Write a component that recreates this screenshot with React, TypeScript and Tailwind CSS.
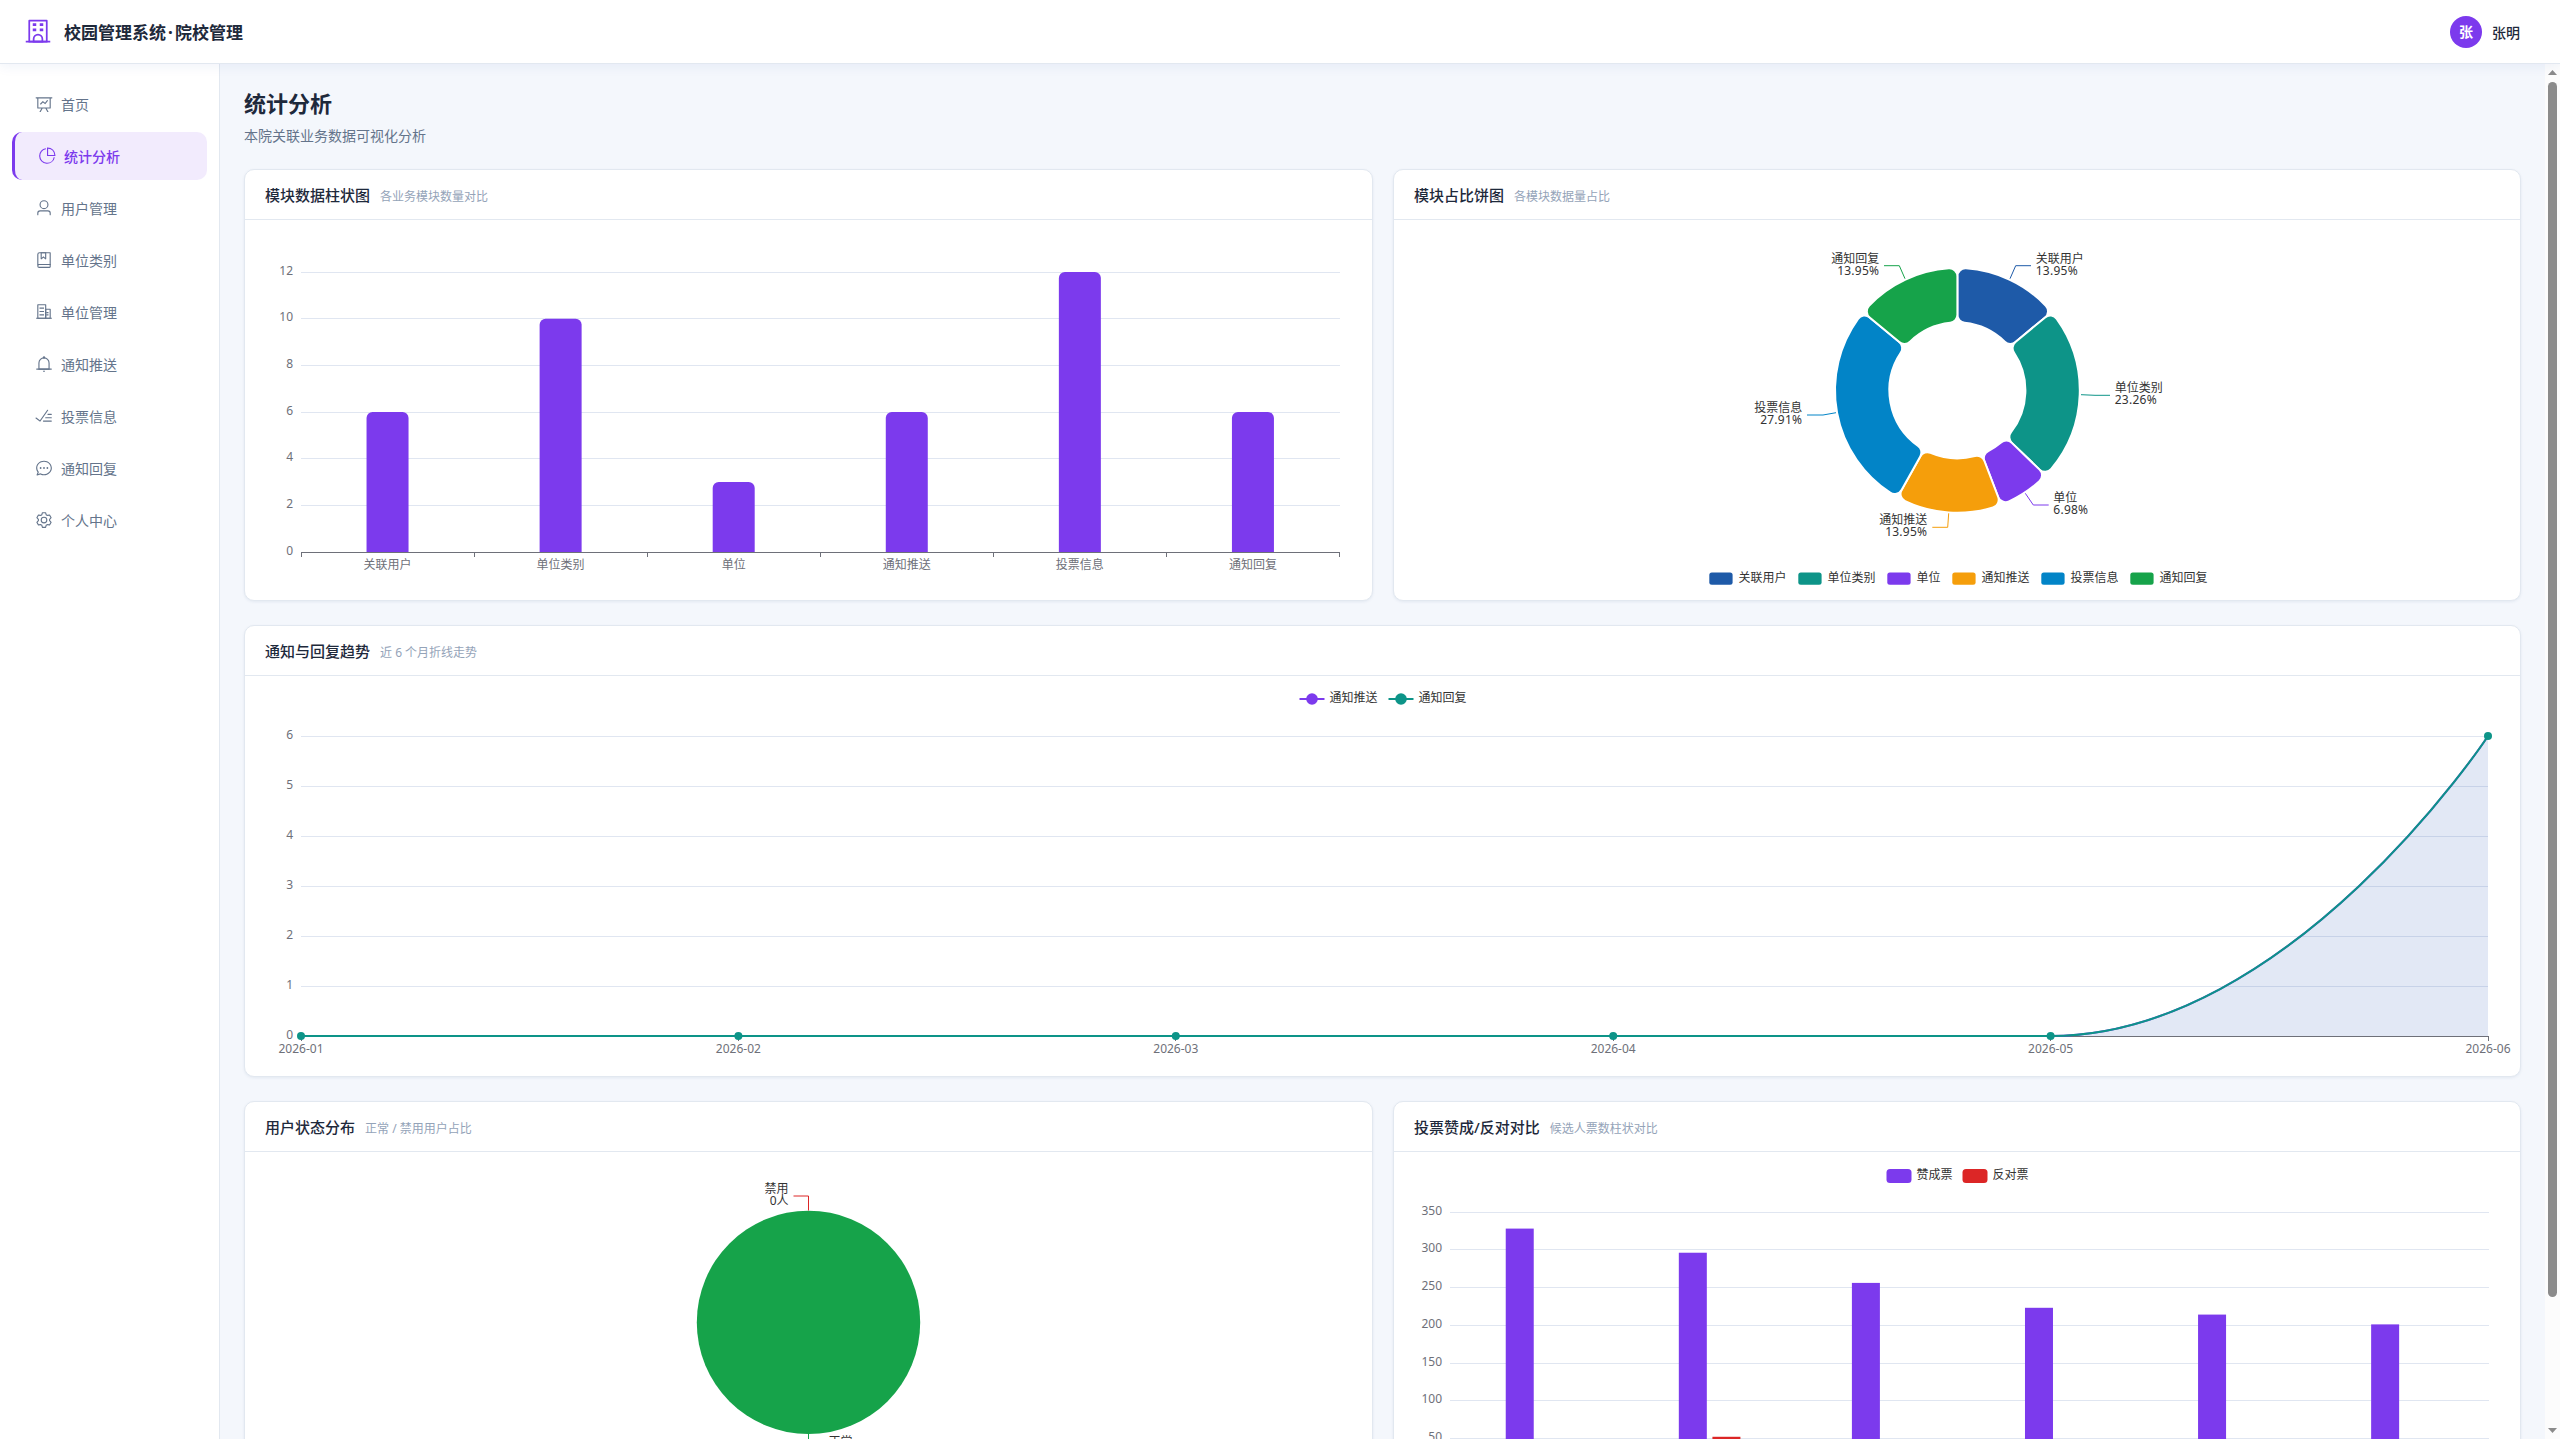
import clsx from "clsx";

const PURPLE = "#7c3aed";
const TEAL = "#0d9488";
const GREEN = "#16a34a";
const RED = "#dc2626";
const GRID = "#e0e6f1";
const AXIS = "#6e7079";

const icons = {
  school: [
    "M224 128v704h576V128zm-32-64h640a32 32 0 0 1 32 32v768a32 32 0 0 1-32 32H192a32 32 0 0 1-32-32V96a32 32 0 0 1 32-32",
    "M64 832h896v64H64zm256-640h128v96H320z",
    "M384 832h256v-64a128 128 0 1 0-256 0zm128-256a192 192 0 0 1 192 192v128H320V768a192 192 0 0 1 192-192M320 384h128v96H320zm256-192h128v96H576zm0 192h128v96H576z",
  ],
  dataLine: [
    "M359.168 768H160a32 32 0 0 1-32-32V192H64a32 32 0 0 1 0-64h896a32 32 0 1 1 0 64h-64v544a32 32 0 0 1-32 32H665.216l110.848 192h-73.856L591.36 768H433.024L322.176 960H248.32zM832 192H192v512h640zM342.656 534.656a32 32 0 1 1-45.312-45.312L444.992 341.76l125.44 94.08L679.04 300.032a32 32 0 1 1 49.92 39.936L581.632 524.224 451.008 426.24 342.656 534.592z",
  ],
  pieChart: [
    "M448 68.48v64.832A384.128 384.128 0 0 0 512 896a384.128 384.128 0 0 0 378.688-320h64.768A448.128 448.128 0 0 1 64 512 448.128 448.128 0 0 1 448 68.48",
    "M576 97.28V448h350.72A384.064 384.064 0 0 0 576 97.28M512 64V33.152A448 448 0 0 1 990.848 512H512z",
  ],
  user: [
    "M512 512a192 192 0 1 0 0-384 192 192 0 0 0 0 384m0 64a256 256 0 1 1 0-512 256 256 0 0 1 0 512m320 320v-96a96 96 0 0 0-96-96H288a96 96 0 0 0-96 96v96a32 32 0 1 1-64 0v-96a160 160 0 0 1 160-160h448a160 160 0 0 1 160 160v96a32 32 0 1 1-64 0",
  ],
  collection: [
    "M192 736h640V128H256a64 64 0 0 0-64 64zm64-672h608a32 32 0 0 1 32 32v672a32 32 0 0 1-32 32H160l-32 57.536V192A128 128 0 0 1 256 64",
    "M240 800a48 48 0 1 0 0 96h592v-96zm0-64h656v160a64 64 0 0 1-64 64H240a112 112 0 0 1 0-224m144-608v250.88l96-76.8 96 76.8V128zm-64-64h320v381.44a32 32 0 0 1-51.968 24.96L480 384l-108.032 86.4A32 32 0 0 1 320 445.44z",
  ],
  office: [
    "M192 128v704h384V128zm-32-64h448a32 32 0 0 1 32 32v768a32 32 0 0 1-32 32H160a32 32 0 0 1-32-32V96a32 32 0 0 1 32-32",
    "M256 256h256v64H256zm0 192h256v64H256zm0 192h256v64H256zm384-128h128v64H640zm0 128h128v64H640zM64 832h896v64H64z",
    "M640 384v448h192V384zm-32-64h256a32 32 0 0 1 32 32v512a32 32 0 0 1-32 32H608a32 32 0 0 1-32-32V352a32 32 0 0 1 32-32",
  ],
  bell: [
    "M512 64a64 64 0 0 1 64 64v64H448v-64a64 64 0 0 1 64-64",
    "M256 768h512V448a256 256 0 1 0-512 0zm256-640a320 320 0 0 1 320 320v384H192V448a320 320 0 0 1 320-320",
    "M96 768h832q32 0 32 32t-32 32H96q-32 0-32-32t32-32m352 128h128a64 64 0 0 1-128 0",
  ],
  finished: [
    "M280.768 753.728 691.456 167.04a32 32 0 1 1 52.416 36.672L314.24 817.472a32 32 0 0 1-45.44 7.296l-230.4-172.8a32 32 0 0 1 38.4-51.2zM736 448a32 32 0 1 1 0-64h192a32 32 0 1 1 0 64zM608 640a32 32 0 0 1 0-64h319.936a32 32 0 1 1 0 64zM480 832a32 32 0 1 1 0-64h447.936a32 32 0 1 1 0 64z",
  ],
  chat: [
    "m174.72 855.68 135.296-45.12 23.68 11.84C388.096 849.536 448.576 864 512 864c211.84 0 384-166.784 384-352S723.84 160 512 160 128 326.784 128 512c0 69.12 24.96 139.264 70.848 199.232l22.08 28.8-46.272 115.584zm-45.248 82.56A32 32 0 0 1 89.6 896l58.368-145.92C94.72 680.32 64 596.864 64 512 64 299.904 256 96 512 96s448 203.904 448 416-192 416-448 416a461.06 461.06 0 0 1-206.912-48.384l-175.616 58.56z",
    "M512 563.2a51.2 51.2 0 1 1 0-102.4 51.2 51.2 0 0 1 0 102.4m192 0a51.2 51.2 0 1 1 0-102.4 51.2 51.2 0 0 1 0 102.4m-384 0a51.2 51.2 0 1 1 0-102.4 51.2 51.2 0 0 1 0 102.4",
  ],
  setting: [
    "M600.704 64a32 32 0 0 1 30.464 22.208l35.2 109.376c14.784 7.232 28.928 15.36 42.432 24.512l112.384-24.192a32 32 0 0 1 34.432 15.36L944.32 364.8a32 32 0 0 1-4.032 37.504l-77.12 85.12a357.12 357.12 0 0 1 0 49.024l77.12 85.248a32 32 0 0 1 4.032 37.504l-88.704 153.6a32 32 0 0 1-34.432 15.296L708.8 803.904c-13.44 9.088-27.648 17.28-42.368 24.512l-35.264 109.376A32 32 0 0 1 600.704 960H423.296a32 32 0 0 1-30.464-22.208L357.696 828.48a351.616 351.616 0 0 1-42.56-24.64l-112.32 24.256a32 32 0 0 1-34.432-15.36L79.68 659.2a32 32 0 0 1 4.032-37.504l77.12-85.248a357.12 357.12 0 0 1 0-48.896l-77.12-85.248A32 32 0 0 1 79.68 364.8l88.704-153.6a32 32 0 0 1 34.432-15.296l112.32 24.256c13.568-9.152 27.776-17.408 42.56-24.64l35.2-109.312A32 32 0 0 1 423.232 64H600.64zm-23.424 64H446.72l-36.352 113.088-24.512 11.968a294.113 294.113 0 0 0-34.816 20.096l-22.656 15.36-116.224-25.088-65.28 113.152 79.68 88.192-1.92 27.136a293.12 293.12 0 0 0 0 40.192l1.92 27.136-79.808 88.192 65.344 113.152 116.224-25.024 22.656 15.296a294.113 294.113 0 0 0 34.816 20.096l24.512 11.968L446.72 896h130.688l36.48-113.152 24.448-11.904a288.282 288.282 0 0 0 34.752-20.096l22.592-15.296 116.288 25.024 65.28-113.152-79.744-88.192 1.92-27.136a293.12 293.12 0 0 0 0-40.256l-1.92-27.136 79.808-88.128-65.344-113.152-116.288 24.96-22.592-15.232a287.616 287.616 0 0 0-34.752-20.096l-24.448-11.904L577.344 128zM512 320a192 192 0 1 1 0 384 192 192 0 0 1 0-384m0 64a128 128 0 1 0 0 256 128 128 0 0 0 0-256",
  ],
};

type IconName = keyof typeof icons;

const menu: { name: string; icon: IconName; active?: boolean }[] = [
  { name: "首页", icon: "dataLine" },
  { name: "统计分析", icon: "pieChart", active: true },
  { name: "用户管理", icon: "user" },
  { name: "单位类别", icon: "collection" },
  { name: "单位管理", icon: "office" },
  { name: "通知推送", icon: "bell" },
  { name: "投票信息", icon: "finished" },
  { name: "通知回复", icon: "chat" },
  { name: "个人中心", icon: "setting" },
];

const Icon = ({ name, className }: { name: IconName; className?: string }) => (
  <svg viewBox="0 0 1024 1024" fill="currentColor" className={className}>
    {icons[name].map((d) => (
      <path key={d} d={d} />
    ))}
  </svg>
);

const Header = () => (
  <header className="relative z-10 flex h-16 shrink-0 items-center justify-between border-b border-[#e2e8f0] bg-white pl-6 pr-10 shadow-[0_2px_12px_rgba(30,64,175,0.07)]">
    <div className="flex items-center gap-3">
      <Icon name="school" className="h-7 w-7 text-[#7c3aed]" />
      <h1 className="flex items-center pt-[3px] text-[17px] font-bold leading-6 text-[#1e293b]">
        <span>校园管理系统</span>
        <span className="w-[9px] text-center">·</span>
        <span>院校管理</span>
      </h1>
    </div>
    <div className="flex items-center gap-2.5">
      <div className="flex h-8 w-8 items-center justify-center rounded-full bg-[#7c3aed] pt-px text-sm font-bold text-white">
        张
      </div>
      <span className="pt-0.5 text-sm font-medium text-[#1e293b]">张明</span>
    </div>
  </header>
);

const Sidebar = () => (
  <aside className="w-[220px] shrink-0 border-r border-[#e2e8f0] bg-white px-3 py-4">
    <nav className="flex flex-col gap-1">
      {menu.map((item) => (
        <a
          key={item.name}
          className={clsx(
            "flex h-12 items-center rounded-[10px] px-5 text-sm",
            item.active
              ? "border-l-[3px] border-[#7c3aed] bg-[#f2ebfd] font-medium text-[#7c3aed]"
              : "text-[#64748b]"
          )}
        >
          <span className="mr-[5px] flex w-6 justify-center">
            <Icon name={item.icon} className="h-[18px] w-[18px]" />
          </span>
          <span className="pt-0.5">{item.name}</span>
        </a>
      ))}
    </nav>
  </aside>
);

const Card = ({ title, desc, children }: { title: string; desc: string; children: React.ReactNode }) => (
  <section className="rounded-[10px] border border-[#e2e8f0] bg-white shadow-[0_1px_3px_rgba(30,64,120,0.08)]">
    <div className="flex h-[50px] items-baseline gap-2.5 border-b border-[#e2e8f0] px-5 pt-[14px]">
      <h3 className="text-[15px] font-medium leading-[22px] text-[#1e293b]">{title}</h3>
      <span className="text-xs text-[#94a3b8]">{desc}</span>
    </div>
    <div className="p-5">{children}</div>
  </section>
);

// horizontal split lines with the value labels on the left
const YAxis = ({ ticks, right }: { ticks: { label: number; y: number }[]; right: number }) => (
  <>
    {ticks.map((t) => (
      <g key={t.label}>
        <line x1={36} x2={right} y1={t.y + 0.5} y2={t.y + 0.5} stroke={GRID} shapeRendering="crispEdges" />
        <text x={28} y={t.y + 3} textAnchor="end" fill={AXIS}>
          {t.label}
        </text>
      </g>
    ))}
  </>
);

const modules = [
  { name: "关联用户", value: 6, color: "#1e5aa8" },
  { name: "单位类别", value: 10, color: TEAL },
  { name: "单位", value: 3, color: PURPLE },
  { name: "通知推送", value: 6, color: "#f59e0b" },
  { name: "投票信息", value: 12, color: "#0284c7" },
  { name: "通知回复", value: 6, color: GREEN },
];

const STEP = 173.08;

const ModuleBars = () => {
  const ticks = [32, 78, 125, 172, 218, 265, 312].map((y, i) => ({ label: 12 - i * 2, y }));
  return (
    <svg width={1086} height={340} className="block overflow-visible text-xs">
      <YAxis ticks={ticks} right={1075} />
      {modules.map((m, i) => {
        const cx = 36 + STEP * (i + 0.5);
        const top = 312 - (m.value / 12) * 280;
        const l = cx - 21;
        const r = cx + 21;
        return (
          <g key={m.name}>
            <path
              d={`M${l} 312V${top + 6}A6 6 0 0 1 ${l + 6} ${top}H${r - 6}A6 6 0 0 1 ${r} ${top + 6}V312Z`}
              fill={PURPLE}
            />
            <text x={cx} y={329} textAnchor="middle" fill={AXIS}>
              {m.name}
            </text>
          </g>
        );
      })}
      <line x1={36} x2={1075} y1={312.5} y2={312.5} stroke={AXIS} shapeRendering="crispEdges" />
      {[0, 1, 2, 3, 4, 5, 6].map((i) => {
        const x = Math.round(36 + STEP * i - 0.1) + 0.5;
        return <line key={i} x1={x} x2={x} y1={312} y2={317} stroke={AXIS} shapeRendering="crispEdges" />;
      })}
    </svg>
  );
};

const CX = 543.4;
const CY = 150.4;

const polar = (radius: number, angle: number) =>
  `${(CX + radius * Math.sin(angle)).toFixed(2)} ${(CY - radius * Math.cos(angle)).toFixed(2)}`;

// ring slice with rounded corners
const slicePath = (a0: number, a1: number, r0 = 68, r1 = 122.4, c = 8) => {
  const outer = Math.asin(c / (r1 - c));
  const inner = Math.asin(c / (r0 + c));
  const outerEdge = Math.sqrt((r1 - c) ** 2 - c ** 2);
  const innerEdge = Math.sqrt((r0 + c) ** 2 - c ** 2);
  return [
    `M${polar(innerEdge, a0)}`,
    `L${polar(outerEdge, a0)}`,
    `A${c} ${c} 0 0 1 ${polar(r1, a0 + outer)}`,
    `A${r1} ${r1} 0 0 1 ${polar(r1, a1 - outer)}`,
    `A${c} ${c} 0 0 1 ${polar(outerEdge, a1)}`,
    `L${polar(innerEdge, a1)}`,
    `A${c} ${c} 0 0 1 ${polar(r0, a1 - inner)}`,
    `A${r0} ${r0} 0 0 0 ${polar(r0, a0 + inner)}`,
    `A${c} ${c} 0 0 1 ${polar(innerEdge, a0)}`,
    "Z",
  ].join("");
};

const ringLabels = [
  { line: "596,38.7 601.7,25.7 617,25.7", x: 621.7, y: 25.7, left: false },
  { line: "667,154.7 681,155.3 696,155.3", x: 700.7, y: 155.3, left: false },
  { line: "611.3,253.3 619.3,265 634.7,265", x: 639.3, y: 265, left: false },
  { line: "534.7,273.3 533.7,287.3 518.3,287.3", x: 513.3, y: 287.3, left: true },
  { line: "422,172.7 409,175 393,175", x: 388.3, y: 175, left: true },
  { line: "491,38.7 485.3,25.7 470,25.7", x: 465.3, y: 25.7, left: true },
];

const ringLegend = [295, 384, 473, 538, 627, 716];

const ModuleRing = () => {
  const total = modules.reduce((sum, m) => sum + m.value, 0);
  let start = 0;
  return (
    <svg width={1086} height={340} className="block overflow-visible text-xs">
      {modules.map((m, i) => {
        const a0 = start;
        const a1 = start + (m.value / total) * Math.PI * 2;
        start = a1;
        const label = ringLabels[i];
        const anchor = label.left ? "end" : "start";
        return (
          <g key={m.name}>
            <path d={slicePath(a0, a1)} fill={m.color} stroke="#fff" strokeWidth={2} />
            <polyline points={label.line} fill="none" stroke={m.color} />
            <text x={label.x} y={label.y - 3} textAnchor={anchor} fill="#333">
              {m.name}
            </text>
            <text x={label.x} y={label.y + 9} textAnchor={anchor} fill="#333" className="tracking-[0.25px]">
              {((m.value / total) * 100).toFixed(2)}%
            </text>
            <rect x={ringLegend[i] + 0.3} y={332.6} width={23.3} height={12.2} rx={2.5} fill={m.color} />
            <text x={ringLegend[i] + 29.5} y={342} fill="#333">
              {m.name}
            </text>
          </g>
        );
      })}
    </svg>
  );
};

const months = ["2026-01", "2026-02", "2026-03", "2026-04", "2026-05", "2026-06"];

const TrendLines = () => {
  const ticks = [6, 5, 4, 3, 2, 1, 0].map((label, i) => ({ label, y: 40 + i * 50 }));
  const x = (i: number) => 36 + 437.4 * i;
  const curve = "M36 340H1785.6C2025.3 340 2223 40 2223 40";
  return (
    <svg width={2233} height={360} className="block overflow-visible text-xs">
      <YAxis ticks={ticks} right={2223} />
      <line x1={36} x2={2223} y1={340.5} y2={340.5} stroke={AXIS} shapeRendering="crispEdges" />
      {months.map((m, i) => (
        <g key={m}>
          <line
            x1={Math.floor(x(i)) + 0.5}
            x2={Math.floor(x(i)) + 0.5}
            y1={340}
            y2={345}
            stroke={AXIS}
            shapeRendering="crispEdges"
          />
          <text x={x(i)} y={357} textAnchor="middle" fill={AXIS}>
            {m}
          </text>
        </g>
      ))}
      <path d={`${curve}V340Z`} fill="rgba(30,80,180,0.13)" />
      <path d={curve} fill="none" stroke={PURPLE} strokeWidth={2} />
      <path d={curve} fill="none" stroke={TEAL} strokeWidth={2} />
      {months.map((m, i) => (
        <circle key={m} cx={x(i)} cy={i === 5 ? 40 : 340} r={4} fill={TEAL} />
      ))}
      {[
        { name: "通知推送", color: PURPLE, cx: 1047 },
        { name: "通知回复", color: TEAL, cx: 1136 },
      ].map((s) => (
        <g key={s.name}>
          <line x1={s.cx - 12.5} x2={s.cx + 12.5} y1={3} y2={3} stroke={s.color} strokeWidth={2} />
          <circle cx={s.cx} cy={3} r={5.8} fill={s.color} />
          <text x={s.cx + 17.4} y={6} fill="#333">
            {s.name}
          </text>
        </g>
      ))}
    </svg>
  );
};

const UserStatus = () => (
  <svg width={1086} height={340} className="block overflow-visible text-xs">
    <circle cx={543.5} cy={CY} r={111.7} fill={GREEN} />
    <polyline points="543.5,38.5 543.5,24 528.5,24" fill="none" stroke={RED} />
    <text x={523.5} y={21} textAnchor="end" fill="#333">
      禁用
    </text>
    <text x={523.5} y={33} textAnchor="end" fill="#333">
      0人
    </text>
    <polyline points="543.5,262 543.5,277 558.5,277" fill="none" stroke={GREEN} />
    <text x={563.5} y={274} fill="#333">
      正常
    </text>
  </svg>
);

const votes = [
  { agree: 328, against: 44 },
  { agree: 296, against: 52 },
  { agree: 256, against: 38 },
  { agree: 223, against: 41 },
  { agree: 214, against: 35 },
  { agree: 201, against: 29 },
];

const VoteBars = () => {
  const ticks = [40, 77, 115, 153, 191, 228, 266].map((y, i) => ({ label: 350 - i * 50, y }));
  const height = (v: number) => (v / 350) * 264;
  return (
    <svg width={1086} height={340} className="block overflow-visible text-xs">
      <rect x={472.5} y={-3} width={25} height={14} rx={3.5} fill={PURPLE} />
      <text x={502.5} y={7} fill="#333">
        赞成票
      </text>
      <rect x={548.5} y={-3} width={25} height={14} rx={3.5} fill={RED} />
      <text x={578.5} y={7} fill="#333">
        反对票
      </text>
      <YAxis ticks={ticks} right={1075} />
      {votes.map((v, i) => {
        const cx = 36 + STEP * (i + 0.5);
        return (
          <g key={v.agree}>
            <rect x={cx - 30.8} y={304 - height(v.agree)} width={28} height={height(v.agree)} fill={PURPLE} />
            <rect x={cx + 2.8} y={304 - height(v.against)} width={28} height={height(v.against)} fill={RED} />
          </g>
        );
      })}
    </svg>
  );
};

const Scrollbar = () => (
  <div className="flex w-[15px] shrink-0 flex-col items-center bg-[#fcfcfc] pb-[6px] pt-[6px]">
    <svg width={9} height={5} viewBox="0 0 9 5" fill="#8b8b8b">
      <path d="M4.5 0L9 5H0z" />
    </svg>
    <div className="mt-[7px] h-[1215px] w-[9px] rounded-full bg-[#8b8b8b]" />
    <svg width={9} height={5} viewBox="0 0 9 5" fill="#8b8b8b" className="mt-auto">
      <path d="M0 0H9L4.5 5z" />
    </svg>
  </div>
);

const App = () => {
  return (
    <div className="flex h-screen flex-col overflow-hidden bg-[#f4f7fc] font-['Noto_Sans','Noto_Sans_CJK_SC',sans-serif]">
      <Header />
      <div className="flex min-h-0 flex-1">
        <Sidebar />
        <main className="min-w-0 flex-1 overflow-hidden p-6">
          <h2 className="text-[22px] font-bold leading-[30px] text-[#1e293b]">统计分析</h2>
          <p className="mb-[22px] mt-[7px] text-sm leading-[22px] text-[#64748b]">本院关联业务数据可视化分析</p>
          <div className="flex flex-col gap-6">
            <div className="grid grid-cols-[1129px_1128px] gap-5">
              <Card title="模块数据柱状图" desc="各业务模块数量对比">
                <ModuleBars />
              </Card>
              <Card title="模块占比饼图" desc="各模块数据量占比">
                <ModuleRing />
              </Card>
            </div>
            <Card title="通知与回复趋势" desc="近 6 个月折线走势">
              <TrendLines />
            </Card>
            <div className="grid grid-cols-[1129px_1128px] gap-5">
              <Card title="用户状态分布" desc="正常 / 禁用用户占比">
                <UserStatus />
              </Card>
              <Card title="投票赞成/反对对比" desc="候选人票数柱状对比">
                <VoteBars />
              </Card>
            </div>
          </div>
        </main>
        <Scrollbar />
      </div>
    </div>
  );
};

export default App;
